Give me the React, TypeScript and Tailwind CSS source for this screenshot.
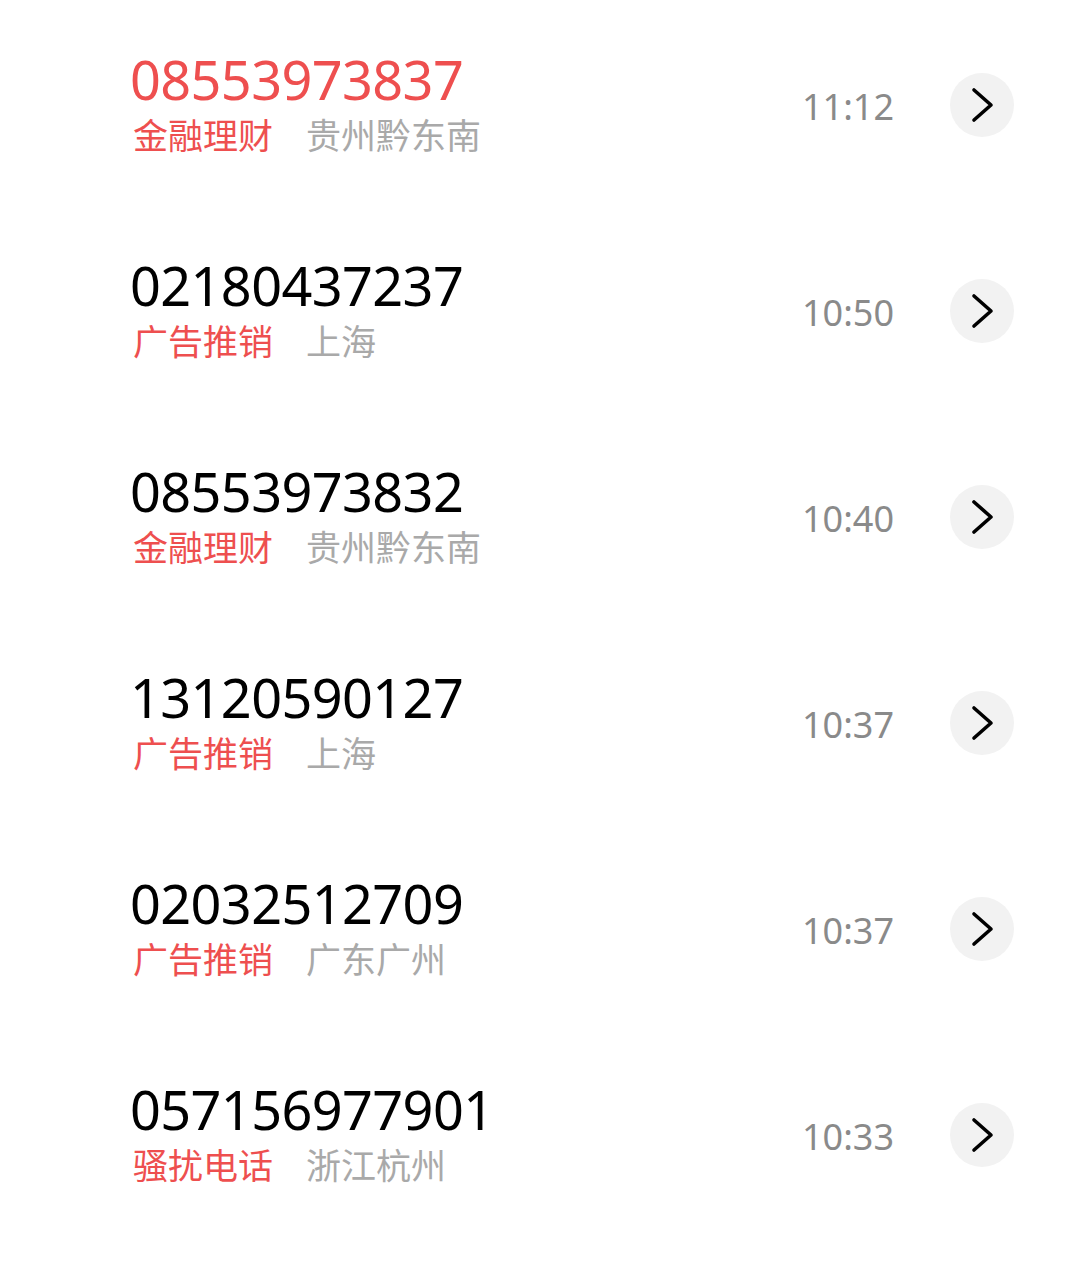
import React from 'react';

type Call = {
  number: string;
  tag: string;
  place: string;
  time: string;
  missed?: boolean;
};

const calls: Call[] = [
  { number: '08553973837', tag: '金融理财', place: '贵州黔东南', time: '11:12', missed: true },
  { number: '02180437237', tag: '广告推销', place: '上海', time: '10:50' },
  { number: '08553973832', tag: '金融理财', place: '贵州黔东南', time: '10:40' },
  { number: '13120590127', tag: '广告推销', place: '上海', time: '10:37' },
  { number: '02032512709', tag: '广告推销', place: '广东广州', time: '10:37' },
  { number: '057156977901', tag: '骚扰电话', place: '浙江杭州', time: '10:33' },
];

const Chevron = () => (
  <svg width="64" height="64" viewBox="0 0 64 64" fill="none">
    <polyline
      points="24,17 41,32 24,47"
      stroke="#000"
      strokeWidth="3.6"
      strokeLinecap="round"
      strokeLinejoin="round"
    />
  </svg>
);

const CallRow: React.FC<{ call: Call }> = ({ call }) => (
  <div className="h-[206px] flex items-center pl-[130px] pr-[65px]">
    <div className="flex-1 min-w-0 pt-[4px]">
      <p
        className={`text-[54px] leading-[54px] tracking-[-0.6px] ${
          call.missed ? 'text-[#ee4f4f]' : 'text-black'
        }`}
      >
        {call.number}
      </p>
      <div className="flex items-center gap-[33px] text-[35px] leading-[52px] pl-[3px] mt-[4px]">
        <span className="text-[#ee4f4f]">{call.tag}</span>
        <span className="text-[#a9a9a9]">{call.place}</span>
      </div>
    </div>
    <span className="text-[36px] text-[#8a8a8a] leading-none mt-[4px]">{call.time}</span>
    <div className="ml-[56px] w-[64px] h-[64px] rounded-full bg-[#f2f2f2] flex items-center justify-center">
      <Chevron />
    </div>
  </div>
);

export default function App() {
  return (
    <div
      className="w-[1079px] h-[1268px] bg-white overflow-hidden pt-[2px]"
      style={{ fontFamily: '"Noto Sans", "Noto Sans CJK SC", sans-serif' }}
    >
      {calls.map((c, i) => (
        <CallRow key={i} call={c} />
      ))}
    </div>
  );
}
